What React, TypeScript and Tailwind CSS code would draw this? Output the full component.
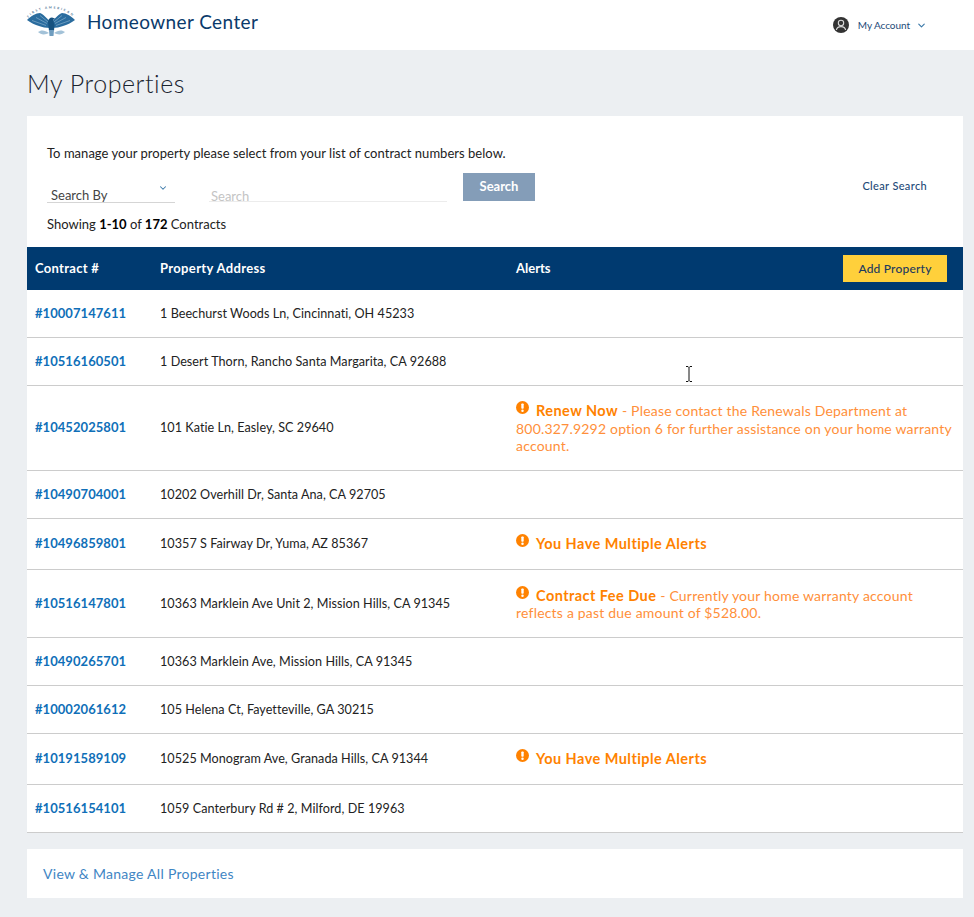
import React from 'react';
import { ChevronDown } from 'lucide-react';

type Row = {
  contract: string;
  address: string;
  height: string;
  alert?: { title: string; body?: string };
};

const rows: Row[] = [
  { contract: '#10007147611', address: '1 Beechurst Woods Ln, Cincinnati, OH 45233', height: 'h-[48px]' },
  { contract: '#10516160501', address: '1 Desert Thorn, Rancho Santa Margarita, CA 92688', height: 'h-[48px]' },
  {
    contract: '#10452025801',
    address: '101 Katie Ln, Easley, SC 29640',
    height: 'h-[85px]',
    alert: {
      title: 'Renew Now',
      body: 'Please contact the Renewals Department at 800.327.9292 option 6 for further assistance on your home warranty account.',
    },
  },
  { contract: '#10490704001', address: '10202 Overhill Dr, Santa Ana, CA 92705', height: 'h-[48px]' },
  {
    contract: '#10496859801',
    address: '10357 S Fairway Dr, Yuma, AZ 85367',
    height: 'h-[51px]',
    alert: { title: 'You Have Multiple Alerts' },
  },
  {
    contract: '#10516147801',
    address: '10363 Marklein Ave Unit 2, Mission Hills, CA 91345',
    height: 'h-[68px]',
    alert: {
      title: 'Contract Fee Due',
      body: 'Currently your home warranty account reflects a past due amount of $528.00.',
    },
  },
  { contract: '#10490265701', address: '10363 Marklein Ave, Mission Hills, CA 91345', height: 'h-[48px]' },
  { contract: '#10002061612', address: '105 Helena Ct, Fayetteville, GA 30215', height: 'h-[48px]' },
  {
    contract: '#10191589109',
    address: '10525 Monogram Ave, Granada Hills, CA 91344',
    height: 'h-[51px]',
    alert: { title: 'You Have Multiple Alerts' },
  },
  { contract: '#10516154101', address: '1059 Canterbury Rd # 2, Milford, DE 19963', height: 'h-[48px]' },
];

const AlertIcon = () => (
  <svg viewBox="0 0 12 12" className="inline-block w-[13px] h-[13px] align-[2px] mr-[7px]">
    <circle cx="6" cy="6" r="6" fill="#ff8200" />
    <rect x="4.9" y="2.2" width="2.2" height="4.9" rx="0.7" fill="#fff" />
    <circle cx="6" cy="8.9" r="1.15" fill="#fff" />
  </svg>
);

const Logo = () => (
  <svg viewBox="0 0 48 34" className="w-[48px] h-[34px] overflow-visible">
    <defs>
      <path id="logo-arc" d="M1 14 C9 0 39 0 47 14" />
    </defs>
    <text fontSize="3.2" fill="#4f7596" letterSpacing="1.7" fontWeight="700" fontFamily="Lato, sans-serif">
      <textPath href="#logo-arc" startOffset="1">FIRST AMERICAN</textPath>
    </text>
    {/* wings */}
    <path d="M0 15 C4 11 9 8 13 8 C16 9 20 13 23 17 L23 23 C19 23 15 22 12 21 C8 20 4 18 0 15 Z" fill="#2a6c9e" />
    <path d="M48 15 C44 11 39 8 35 8 C32 9 28 13 25 17 L25 23 C29 23 33 22 36 21 C40 20 44 18 48 15 Z" fill="#2a6c9e" />
    <path d="M5 15.5 L19 20.5 M9 12.5 L20 18.5 M13 10.5 L21 17 M43 15.5 L29 20.5 M39 12.5 L28 18.5 M35 10.5 L27 17" stroke="#a9c6db" strokeWidth="0.5" />
    {/* head and body */}
    <path d="M21 17 C21 14 23 12.5 25 12.5 L28 13.5 L26 15 L27.5 20 L27 26 L22 26 Z" fill="#17527f" />
    <path d="M22 25 L27 25 L26.5 31 L22.5 31 Z" fill="#6f9dbf" />
    {/* branches */}
    <path d="M11 27 C14 24.5 18 25 22 28 C18 30 14 30 11 27 Z" fill="#a3c2d8" />
    <path d="M38 27 C35 24.5 31 25 27 28 C31 30 35 30 38 27 Z" fill="#a3c2d8" />
  </svg>
);

const AccountIcon = () => (
  <svg viewBox="0 0 16 16" className="w-[16px] h-[16px]">
    <circle cx="8" cy="8" r="8" fill="#333333" />
    <circle cx="8" cy="6" r="2.7" fill="none" stroke="#d9d9d9" strokeWidth="1.1" />
    <path d="M3.4 13 C3.8 10.4 5.6 9.6 8 9.6 C10.4 9.6 12.2 10.4 12.6 13" fill="none" stroke="#d9d9d9" strokeWidth="1.1" />
  </svg>
);

const App: React.FC = () => {
  return (
    <div className="min-h-[917px] bg-[#eceff2] font-['Lato',sans-serif] text-[#111]">
      <header className="h-[50px] bg-white flex items-center pl-[27px] pr-[47px]">
        <div className="flex items-center mb-[6px]">
          <Logo />
          <span className="ml-[12px] text-[19px] tracking-[0.4px] text-[#0a3a6b]">Homeowner Center</span>
        </div>
        <div className="ml-auto flex items-center">
          <AccountIcon />
          <span className="ml-[9px] text-[10px] tracking-[-0.05px] text-[#1d4a78]">My Account</span>
          <ChevronDown className="ml-[6px] w-[11px] h-[11px] text-[#3a78a8]" strokeWidth={2.5} />
        </div>
      </header>

      <main className="pl-[27px] pr-[11px]">
        <h1 className="pt-[15px] h-[66px] text-[25px] leading-[36px] tracking-[0.55px] font-light text-[#1a2430]">My Properties</h1>

        <section className="bg-white">
          <div className="h-[131px] pl-[20px] pr-[36px] pt-[28px]">
            <p className="text-[13px] leading-[18px] tracking-[0.03px] text-[#222]">
              To manage your property please select from your list of contract numbers below.
            </p>
            <div className="flex items-start mt-[11px]">
              <div className="w-[128px] h-[30px] pt-[13px] pl-[4px] border-b border-[#d5d5d5] flex justify-between text-[13px] leading-[19px] text-[#444]">
                <span>Search By</span>
                <ChevronDown className="w-[10px] h-[10px] mr-[7px] mt-[-3px] text-[#3a78a8]" strokeWidth={2.5} />
              </div>
              <div className="ml-[34px] w-[238px] h-[29px] pt-[15px] border-b border-[#ececec] pl-[2px] text-[13px] leading-[17px] text-[#c4c4c4]">
                Search
              </div>
              <button className="ml-[16px] w-[72px] h-[28px] bg-[#849db8] text-white text-[13px] font-bold">Search</button>
              <a className="ml-auto mt-[6px] text-[11px] leading-[14px] tracking-[0.35px] font-medium text-[#1d4a78]">Clear Search</a>
            </div>
            <p className="mt-[12px] text-[13px] leading-[18px] text-[#222]">
              Showing <b className="font-bold text-black">1-10</b> of <b className="font-bold text-black">172</b> Contracts
            </p>
          </div>

          <div className="h-[43px] bg-[#003a70] text-white text-[13px] font-bold grid grid-cols-[125px_356px_1fr] items-center pl-[8px] pr-[16px]">
            <span className="tracking-[0.3px]">Contract #</span>
            <span className="tracking-[0.35px]">Property Address</span>
            <div className="flex items-center justify-between">
              <span>Alerts</span>
              <button className="w-[104px] h-[27px] bg-[#ffd03b] text-[#1d3a5f] text-[12px] font-medium tracking-[0.2px]">Add Property</button>
            </div>
          </div>

          {rows.map((row) => (
            <div
              key={row.contract}
              className={`${row.height} grid grid-cols-[125px_356px_1fr] items-center pl-[8px] pr-[16px] border-b border-[#cccccc]`}
            >
              <a className="text-[13px] font-bold tracking-[0.05px] text-[#0f6fb8]">{row.contract}</a>
              <span className="pt-[1px] text-[12.6px] tracking-[0.05px] text-[#222]">{row.address}</span>
              {row.alert ? (
                <p className={`mr-[-6px] text-[14px] leading-[17.5px] tracking-[0.2px] text-[#ff8f3a] ${row.alert.body ? '' : 'mb-[2px]'}`}>
                  <AlertIcon />
                  <b className="font-bold text-[#ff8200] text-[14.5px] tracking-[0.45px]">{row.alert.title}</b>
                  {row.alert.body ? ` - ${row.alert.body}` : ''}
                </p>
              ) : (
                <span />
              )}
            </div>
          ))}
        </section>

        <div className="mt-[16px] h-[49px] bg-white pl-[16px] pb-[1px] flex items-center text-[14px] tracking-[0.28px] text-[#3f86c4]">
          View &amp; Manage All Properties
        </div>
      </main>

      {/* text cursor caught in the screenshot */}
      <svg viewBox="0 0 8 16" className="absolute left-[685px] top-[366px] w-[8px] h-[16px]">
        <path d="M1 .5h2l1 1 1-1h2M4 1.5v13M1 15.5h2l1-1 1 1h2" fill="none" stroke="#111" strokeWidth="1" />
      </svg>
    </div>
  );
};

export default App;
